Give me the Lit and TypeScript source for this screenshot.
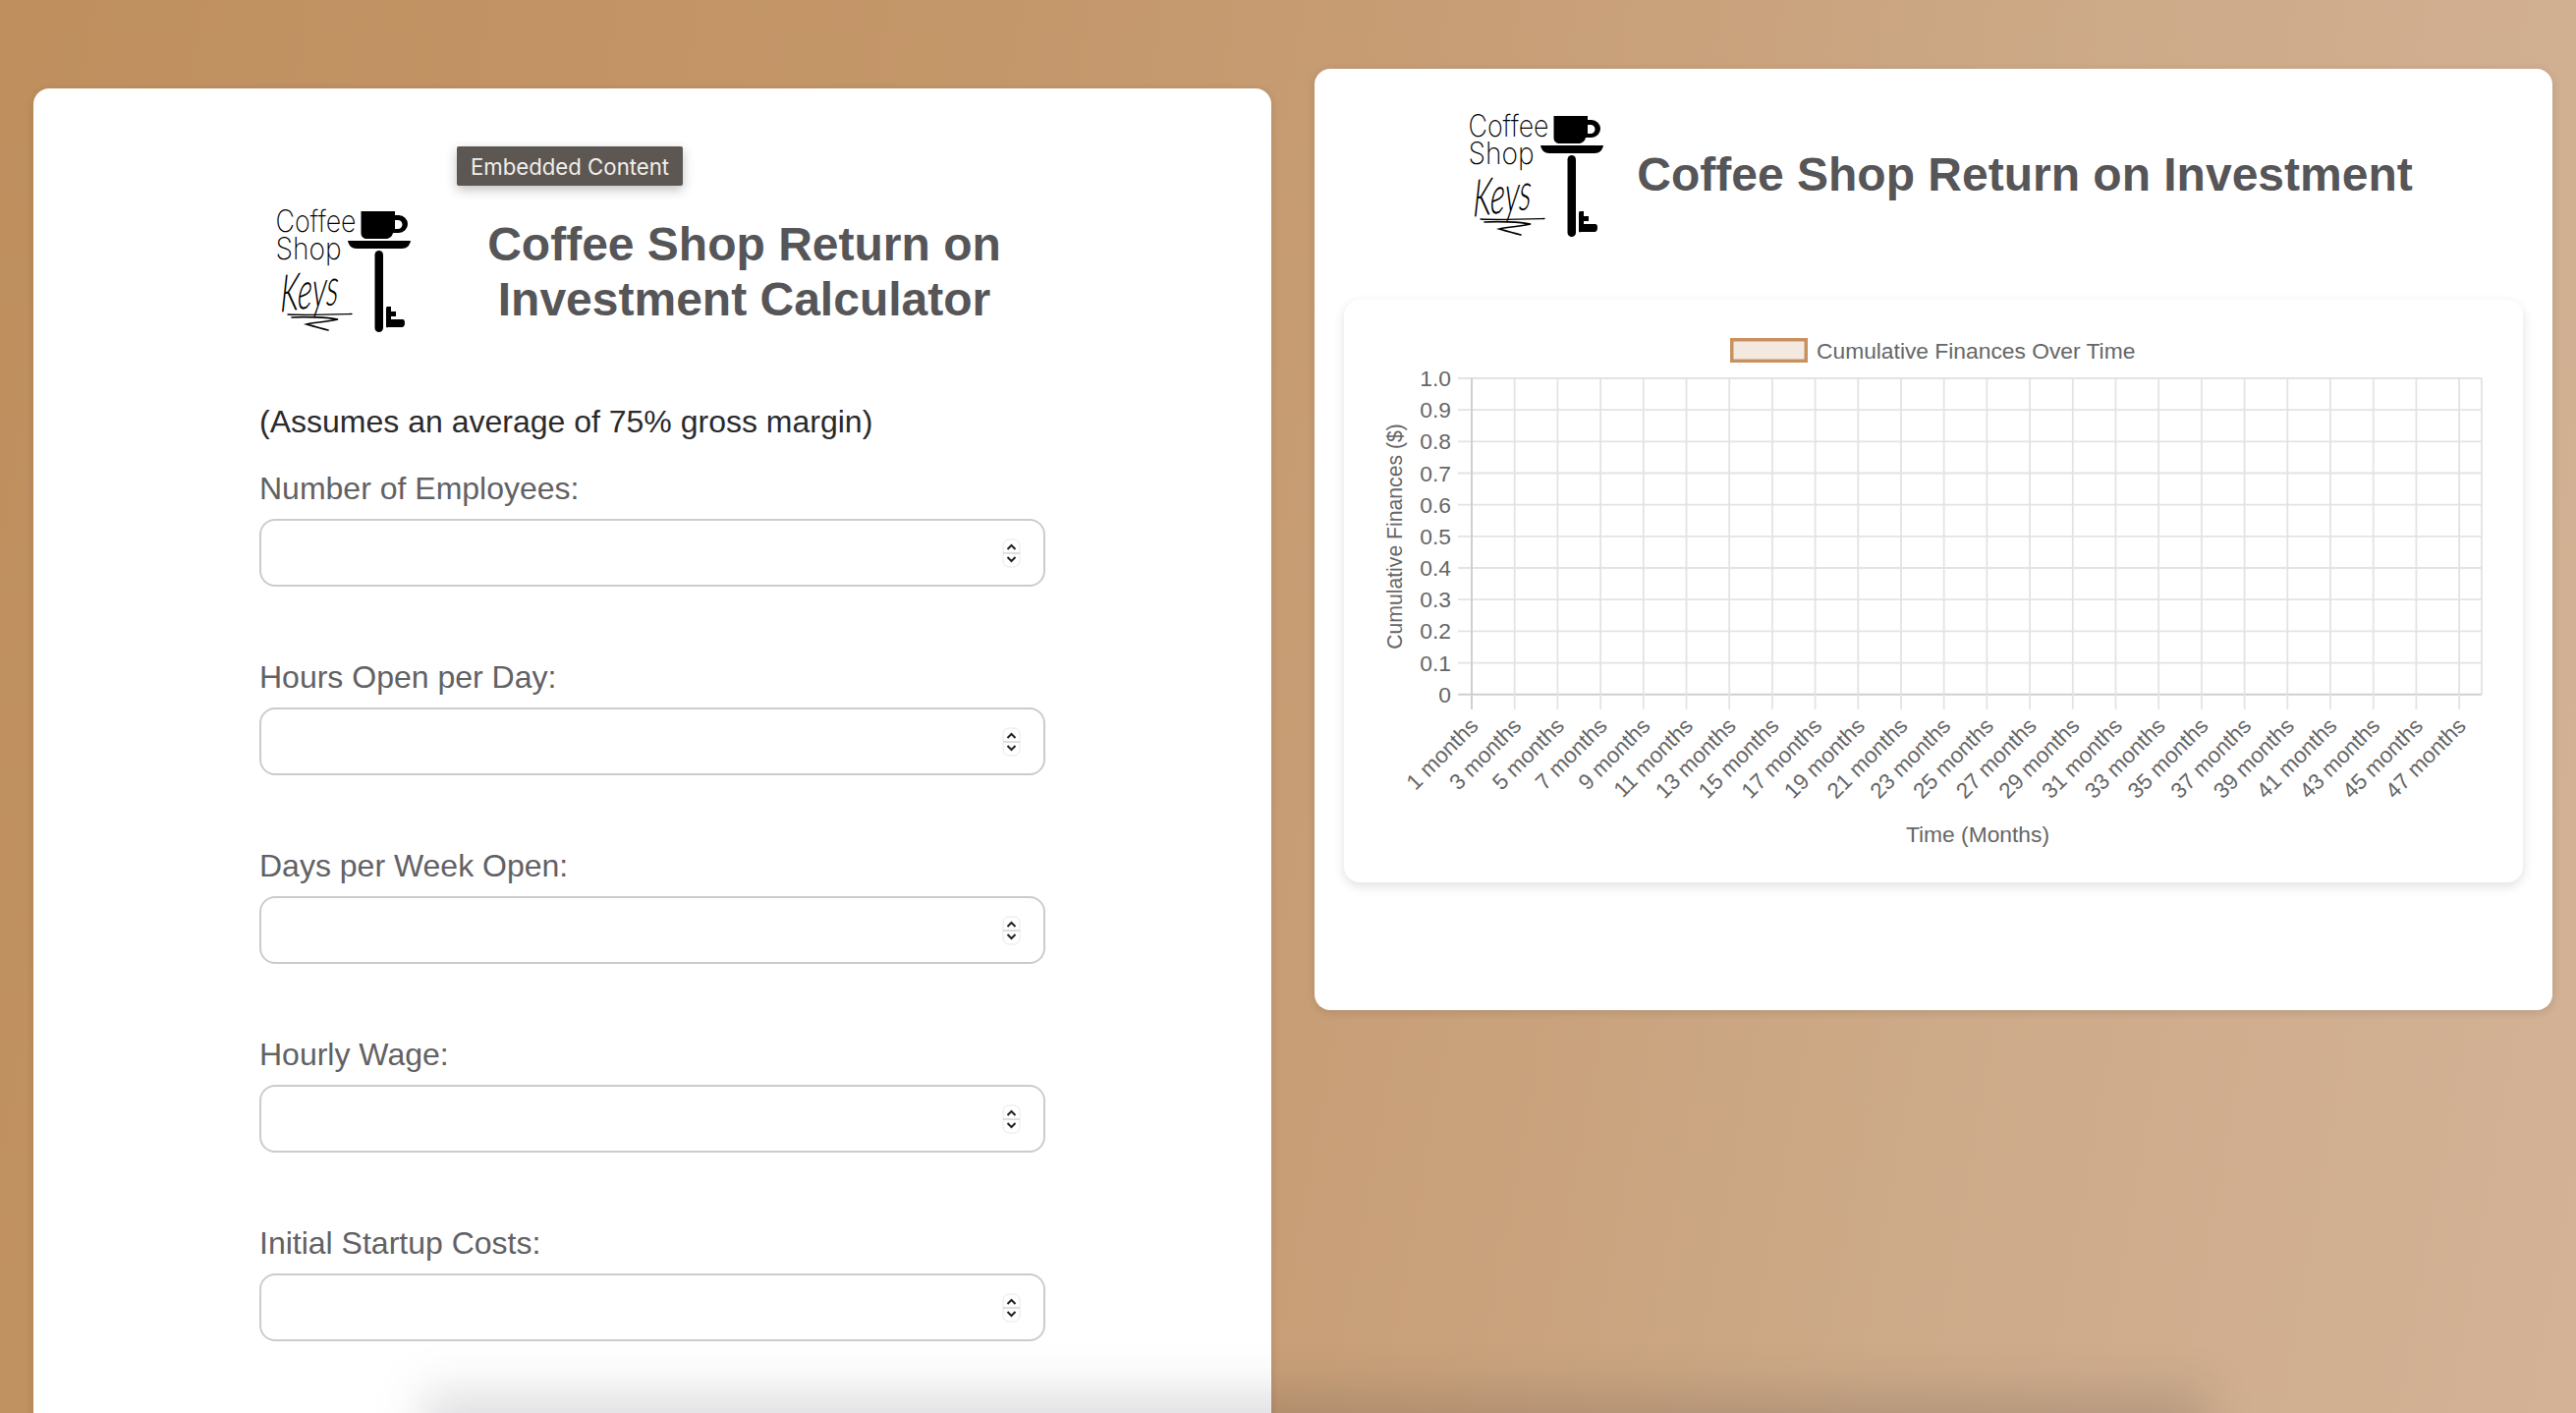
import { LitElement, html, css, svg } from "lit";
import { customElement } from "lit/decorators.js";

const logo = () => html`<svg class="logo" viewBox="0 0 150 150" width="150" height="150">
  <text x="9.500" y="36" class="lt" textLength="82" lengthAdjust="spacingAndGlyphs">Coffee</text>
  <text x="9.500" y="64" class="lt" textLength="67" lengthAdjust="spacingAndGlyphs">Shop</text>
  <text x="34" y="115" class="keys" textLength="60" lengthAdjust="spacingAndGlyphs" transform="rotate(-8 34 115) skewX(-10)">Keys</text>
  <path d="M22 120 C40 121 70 120 87 119.500" fill="none" stroke="#000" stroke-width="1.300" stroke-linecap="round"/>
  <path d="M26 123 C40 122 62 123 73 125 C60 128 48 128 41 130 C48 132 55 134 63 136" fill="none" stroke="#000" stroke-width="1.700" stroke-linecap="round"/>
  <path d="M96.500 15 H131 V19 H135 A9 9 0 0 1 135 37 H129 C128 41 125 43 121 43 H103 C99 43 96.500 41 96.500 37 Z M131 24 V33 H134 A4.500 4.500 0 0 0 134 24 Z" fill="#000" fill-rule="evenodd"/>
  <path d="M83 45 H147 C146 50 143 53 138 53 H92 C87 53 84 50 83 45 Z" fill="#000"/>
  <rect x="110.500" y="55" width="8.500" height="83" rx="4.250" fill="#000"/>
  <path d="M122 114 C122 112 123 112 124 112 H127 V117 H132 V122 H127 V125 H138 C141 125 141 127 141 129 C141 131 140 133 138 133 H124 C123 134 122 133 122 132 Z" fill="#000"/>
</svg>`;

const X0 = 130, STEP = 21.85, Y0 = 80, YSTEP = 32.17;

const chart = () => {
  const months = Array.from({ length: 24 }, (_, i) => i * 2);
  const ys = Array.from({ length: 11 }, (_, i) => i);
  return html`<svg class="chart" viewBox="0 0 1200 593" width="1200" height="593">
    ${svg`
    <rect x="394.750" y="40.750" width="75.500" height="21.500" fill="#f4e9e0" stroke="#c8925f" stroke-width="3.500"/>
    <text x="481" y="60" class="t">Cumulative Finances Over Time</text>
    ${ys.map((i) => {
      const y = Y0 + i * YSTEP;
      return svg`<line x1="116" x2="1158" y1=${y} y2=${y} class=${i === 10 ? "axis" : "g"}/>
      <text x="109" y=${y + 8} text-anchor="end" class="t">${i === 10 ? "0" : ((10 - i) / 10).toFixed(1)}</text>`;
    })}
    ${months.map((m, i) => {
      const x = X0 + m * STEP;
      return svg`<line x1=${x} x2=${x} y1=${Y0} y2="417" class=${i === 0 ? "axis" : "g"}/>
      <text transform="translate(${x + 8} 435) rotate(-45)" text-anchor="end" class="t rot">${m + 1} months</text>`;
    })}
    <line x1="1158" x2="1158" y1=${Y0} y2="402" class="g"/>
    <text x="645" y="552" text-anchor="middle" class="t">Time (Months)</text>
    <text transform="translate(59 241) rotate(-90)" text-anchor="middle" class="t ylab">Cumulative Finances ($)</text>
    `}
  </svg>`;
};

const FIELDS = ["Number of Employees:", "Hours Open per Day:", "Days per Week Open:", "Hourly Wage:", "Initial Startup Costs:"];

@customElement("app-root")
export class AppRoot extends LitElement {
  static styles = css`
    :host {
      display: flex;
      align-items: flex-start;
      gap: 44px;
      position: relative;
      width: 2622px;
      height: 1438px;
      overflow: hidden;
      padding-left: 34px;
      box-sizing: border-box;
      background: linear-gradient(100deg, #bf8f5e 0%, #c4976a 35%, #c89f78 55%, #cdaa88 75%, #d3b296 100%);
      font-family: "Liberation Sans", Arial, sans-serif;
    }
    .card {
      width: 1260px;
      flex: none;
      box-sizing: border-box;
      background: #fff;
      border-radius: 16px;
      box-shadow: 0 2px 10px rgba(0, 0, 0, 0.12);
    }
    .left { margin-top: 90px; padding: 110px 230px 200px; }
    .right { margin-top: 70px; padding: 33px 30px 130px; }
    .head { display: flex; align-items: center; justify-content: center; gap: 37px; }
    .left .head { margin: 0 -30px; }
    .right .head { gap: 31px; margin-left: 5px; }
    .logo { display: block; flex: none; }
    .lt { font: 200 31px Inter, sans-serif; fill: #000; }
    .keys { font: italic 300 52px Lato, sans-serif; fill: #000; }
    h1 { margin: 0; color: #565558; font-size: 48px; line-height: 56px; font-weight: 700; text-align: center; }
    .left h1 { width: 600px; padding-top: 3px; }
    .note { margin: 60px 0 0; font-size: 32px; line-height: 38px; color: #2a2a2c; }
    .field { display: flex; flex-direction: column; margin-bottom: 73px; }
    .note + .field { margin-top: 30px; }
    label { font-size: 32px; line-height: 38px; color: #626164; margin-bottom: 12px; }
    .box {
      display: flex;
      align-items: center;
      height: 69px;
      box-sizing: border-box;
      border: 2px solid #ccc;
      border-radius: 16px;
      padding-right: 23px;
    }
    input { flex: 1; min-width: 0; border: 0; outline: 0; background: none; font-size: 28px; padding: 0 24px; }
    .spin { display: block; flex: none; }
    .chartcard {
      margin-top: 52px;
      background: #fff;
      border-radius: 16px;
      height: 593px;
      box-shadow: 0 4px 12px rgba(0, 0, 0, 0.12);
    }
    .chart { display: block; }
    .chart .t { font: 22.800px "Liberation Sans", Arial, sans-serif; fill: #666; }
    .chart .rot { font-size: 22.400px; }
    .chart .ylab { font-size: 21.200px; }
    .chart .g { stroke: #e4e2e6; stroke-width: 1.800; }
    .chart .axis { stroke: #d0ced2; stroke-width: 2; }
    .tip {
      position: absolute;
      left: 465px;
      top: 149px;
      height: 40px;
      width: 230px;
      display: flex;
      align-items: center;
      justify-content: center;
      background: #5c5753;
      color: #f2eee9;
      font: 400 22.200px Inter, sans-serif;
      box-shadow: 0 4px 12px rgba(0, 0, 0, 0.25);
      border-radius: 2px;
    }
    .dock {
      position: absolute;
      left: 430px;
      right: 377px;
      bottom: -50px;
      height: 72px;
      background: rgba(30, 25, 40, 0.14);
      filter: blur(24px);
    }
  `;

  render() {
    return html`
      <section class="card left">
        <div class="head">${logo()}<h1>Coffee Shop Return on Investment Calculator</h1></div>
        <p class="note">(Assumes an average of 75% gross margin)</p>
        ${FIELDS.map(
          (f) => html`<div class="field">
            <label>${f}</label>
            <div class="box">
              <input type="text" aria-label=${f} />
              <svg class="spin" width="19" height="30" viewBox="0 0 19 30">
                <rect x="1" y="1" width="17" height="28" rx="6" fill="#fff" stroke="#e8e8e8"/>
                <line x1="1" x2="18" y1="15" y2="15" stroke="#d4d4d4" stroke-width="1.500"/>
                <path d="M5.500 11 L9.500 7 L13.500 11 M5.500 19 L9.500 23 L13.500 19" fill="none" stroke="#222" stroke-width="2"/>
              </svg>
            </div>
          </div>`
        )}
      </section>
      <section class="card right">
        <div class="head">${logo()}<h1>Coffee Shop Return on Investment</h1></div>
        <div class="chartcard">${chart()}</div>
      </section>
      <div class="tip">Embedded Content</div>
      <div class="dock"></div>
    `;
  }
}
